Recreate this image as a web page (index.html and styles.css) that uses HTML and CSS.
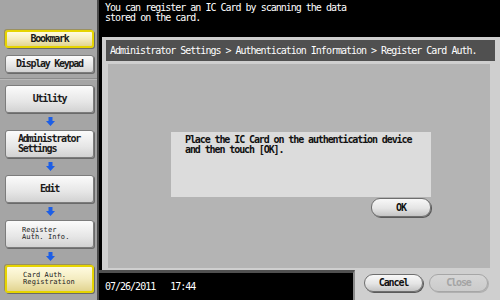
FILE: index.html
```html
<!DOCTYPE html>
<html>
<head>
<meta charset="utf-8">
<link rel="stylesheet" href="styles.css">
</head>
<body>
<div class="sidebar">
  <div class="top">
    <div class="btn yellow">Bookmark</div>
    <div class="btn">Display Keypad</div>
  </div>
  <div class="flow">
    <div class="btn tall">Utility</div>
    <div class="arrow"><svg width="9" height="9" viewBox="0 0 9 9"><path d="M2.5 0h4v4h2.5l-4.5 5L0 4h2.5z" fill="#1c5ee6"/></svg></div>
    <div class="btn tall left">Administrator<br>Settings</div>
    <div class="arrow"><svg width="9" height="9" viewBox="0 0 9 9"><path d="M2.5 0h4v4h2.5l-4.5 5L0 4h2.5z" fill="#1c5ee6"/></svg></div>
    <div class="btn tall">Edit</div>
    <div class="arrow"><svg width="9" height="9" viewBox="0 0 9 9"><path d="M2.5 0h4v4h2.5l-4.5 5L0 4h2.5z" fill="#1c5ee6"/></svg></div>
    <div class="btn tall small left">Register<br>Auth. Info.</div>
    <div class="arrow"><svg width="9" height="9" viewBox="0 0 9 9"><path d="M2.5 0h4v4h2.5l-4.5 5L0 4h2.5z" fill="#1c5ee6"/></svg></div>
    <div class="btn tall small left yellow">Card Auth.<br>Registration</div>
  </div>
</div>
<div class="main">
  <div class="header">You can register an IC Card by scanning the data<br>stored on the card.</div>
  <div class="panel">
    <div class="crumb">Administrator Settings &gt; Authentication Information &gt; Register Card Auth.</div>
    <div class="inner">
      <div class="dialog">
        <div class="message">Place the IC Card on the authentication device<br>and then touch [OK].</div>
        <div class="okrow"><div class="pill ok">OK</div></div>
      </div>
    </div>
  </div>
  <div class="bottom">
    <div class="footer"><span>07/26/2011</span><span class="time">17:44</span></div>
    <div class="actions">
      <div class="pill">Cancel</div>
      <div class="pill disabled">Close</div>
    </div>
  </div>
</div>
</body>
</html>
```
FILE: styles.css
```css
html, body {
  margin: 0;
  padding: 0;
}
body {
  width: 500px;
  height: 300px;
  overflow: hidden;
  display: flex;
  font-family: "DejaVu Sans Mono", "Liberation Mono", monospace;
  font-size: 10px;
  line-height: 10px;
  letter-spacing: -1px;
}
.sidebar {
  width: 97px;
  background: #a5a5a5;
  border-right: 2px solid #4a4a4a;
  display: flex;
  flex-direction: column;
}
.top {
  height: 79px;
  box-sizing: border-box;
  padding: 30px 0 0 5px;
  border-bottom: 1px solid #8c8c8c;
  display: flex;
  flex-direction: column;
  gap: 7px;
}
.flow {
  padding: 5px 0 0 5px;
  display: flex;
  flex-direction: column;
  border-top: 1px solid #b8b8b8;
}
.btn {
  width: 89px;
  height: 18px;
  box-sizing: border-box;
  border: 1px solid #7c7c7c;
  border-radius: 3px;
  background: linear-gradient(#fbfbfb, #e6e6e6 60%, #d2d2d2);
  box-shadow: 1px 1px 0 #6a6a6a;
  color: #1a1a1a;
  display: flex;
  align-items: center;
  justify-content: center;
  text-align: center;
  font-weight: bold;
  letter-spacing: -1.25px;
}
.btn.tall {
  height: 28px;
}
.btn.left {
  justify-content: flex-start;
  text-align: left;
  padding-left: 12px;
}
.btn.small {
  font-size: 7px;
  line-height: 7px;
  letter-spacing: 0.1px;
  padding-left: 16px;
  font-weight: normal;
}
.btn.yellow {
  border: 2px solid #e6d400;
  background: linear-gradient(#fffbe0, #f4ecc0 50%, #e2d490);
  box-shadow: 1px 1px 0 #6a6a6a, -1px -1px 0 #9a9060;
}
.arrow {
  height: 17px;
  width: 89px;
  display: flex;
  align-items: center;
  justify-content: center;
}
.arrow svg {
  display: block;
  margin-left: 1px;
}
.main {
  flex: 1;
  background: #000;
  display: flex;
  flex-direction: column;
}
.header {
  height: 37px;
  box-sizing: border-box;
  padding: 3px 6px 0 6px;
  color: #fff;
}
.panel {
  height: 233px;
  box-sizing: border-box;
  margin-left: 3px;
  background: #cfcfcf;
  padding: 3px 5px 2px 4px;
  display: flex;
  flex-direction: column;
}
.crumb {
  height: 21px;
  background: #505050;
  color: #fff;
  line-height: 21px;
  padding-left: 4px;
}
.inner {
  flex: 1;
  margin: 3px 5px 0 2px;
  background: #b4b4b4;
  padding: 68px 0 0 63px;
}
.dialog {
  width: 260px;
}
.message {
  height: 65px;
  box-sizing: border-box;
  background: #dcdcdc;
  padding: 3px 14px;
  color: #111;
  font-weight: bold;
  letter-spacing: -1.1px;
}
.okrow {
  display: flex;
  justify-content: flex-end;
  padding-top: 1px;
}
.pill {
  width: 59px;
  height: 18px;
  box-sizing: border-box;
  border: 1px solid #6e6e6e;
  border-radius: 9px;
  background: linear-gradient(#f8f8f8, #e4e4e4 55%, #c4c4c4);
  box-shadow: 1px 1px 0 #5a5a5a;
  display: flex;
  align-items: center;
  justify-content: center;
  color: #111;
  font-weight: bold;
  letter-spacing: -1.1px;
}
.pill.ok {
  width: 60px;
  height: 19px;
}
.pill.disabled {
  border-color: #a6a6a6;
  background: linear-gradient(#d6d6d6, #cbcbcb);
  box-shadow: 1px 1px 0 #b0b0b0;
  color: #a4a4a4;
}
.bottom {
  flex: 1;
  display: flex;
}
.footer {
  width: 256px;
  box-sizing: border-box;
  background: #000;
  border-top: 3px solid #505050;
  border-right: 2px solid #8a8a8a;
  color: #fff;
  padding: 9px 0 0 6px;
}
.time {
  margin-left: 15px;
}
.actions {
  flex: 1;
  background: #cfcfcf;
  display: flex;
  gap: 6px;
  padding: 4px 0 0 9px;
}
```
